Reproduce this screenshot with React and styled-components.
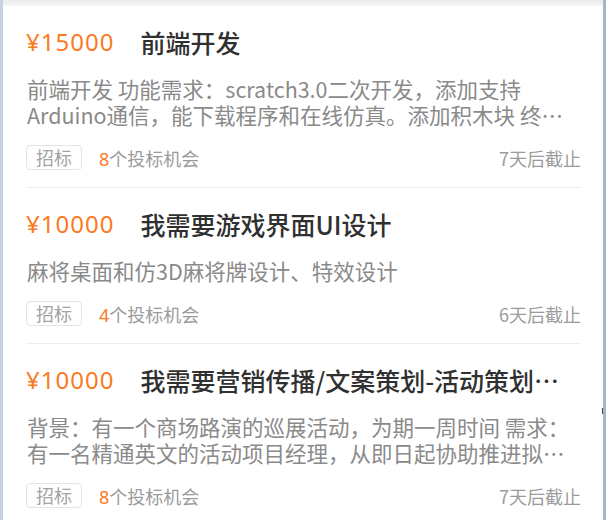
import React from "react";
import styled, { createGlobalStyle } from "styled-components";

const Global = createGlobalStyle`
  html, body { margin: 0; padding: 0; background: #ffffff; }
  body { font-family: "Noto Sans CJK SC", "Noto Sans", sans-serif; }
  * { box-sizing: border-box; }
`;

const Frame = styled.div`
  position: relative;
  width: 606px;
  height: 520px;
  overflow: hidden;
  background: #ffffff;
  border-left: 3px solid #c8d1e4;
  border-right: 3px solid #a8b4ca;
  display: flex;
  flex-direction: column;
`;

const TopBand = styled.div`
  height: 6px;
  flex: none;
  background: linear-gradient(#ececec, #f5f5f5);
`;

const List = styled.div`
  padding: 0 22px 0 23px;
  display: flex;
  flex-direction: column;
`;

const Card = styled.div`
  padding: 20px 0 17px;
  border-bottom: 1px solid #ededed;
  display: flex;
  flex-direction: column;
`;

const TitleRow = styled.div`
  display: flex;
  align-items: center;
  height: 32px;
  gap: 26px;
`;

const Price = styled.span`
  flex: none;
  font-family: "Noto Sans", "Noto Sans CJK SC", sans-serif;
  font-size: 24px;
  letter-spacing: 1px;
  color: #fb7a1f;
  line-height: 32px;
`;

const Title = styled.span`
  flex: 1;
  min-width: 0;
  font-size: 25px;
  font-weight: 500;
  color: #303030;
  line-height: 32px;
  white-space: nowrap;
`;

const Desc = styled.p`
  margin: 18px 0 0;
  padding-left: 1px;
  font-size: 21.5px;
  line-height: 26px;
  color: #8a8a8a;
`;

const Footer = styled.div`
  margin-top: 17px;
  display: flex;
  align-items: center;
  height: 25px;
  font-size: 18px;
  color: #9b9b9b;
`;

const Tag = styled.span`
  flex: none;
  height: 25px;
  line-height: 23px;
  padding: 0 9px;
  border: 1px solid #e4e4e4;
  border-radius: 4px;
  color: #a3a3a3;
  font-size: 18px;
`;

const Bids = styled.span`
  margin-left: 17px;
  flex: 1;
`;

const Count = styled.span`
  color: #fb7a1f;
  font-family: "Noto Sans", "Noto Sans CJK SC", sans-serif;
`;

const Deadline = styled.span`
  flex: none;
`;

const Marker = styled.span`
  position: absolute;
  right: -3px;
  top: 408px;
  width: 4px;
  height: 6px;
  border: 1px solid #444;
  border-right: none;
`;

const items = [
  {
    price: "¥15000",
    title: "前端开发",
    desc: "前端开发 功能需求：scratch3.0二次开发，添加支持Arduino通信，能下载程序和在线仿真。添加积木块 终…",
    bids: 8,
    deadline: "7天后截止",
  },
  {
    price: "¥10000",
    title: "我需要游戏界面UI设计",
    desc: "麻将桌面和仿3D麻将牌设计、特效设计",
    bids: 4,
    deadline: "6天后截止",
  },
  {
    price: "¥10000",
    title: "我需要营销传播/文案策划-活动策划…",
    desc: "背景：有一个商场路演的巡展活动，为期一周时间 需求：有一名精通英文的活动项目经理，从即日起协助推进拟…",
    bids: 8,
    deadline: "7天后截止",
  },
];

export default function App() {
  return (
    <>
      <Global />
      <Frame>
        <TopBand />
        <List>
          {items.map((it, i) => (
            <Card key={i}>
              <TitleRow>
                <Price>{it.price}</Price>
                <Title>{it.title}</Title>
              </TitleRow>
              <Desc>{it.desc}</Desc>
              <Footer>
                <Tag>招标</Tag>
                <Bids>
                  <Count>{it.bids}</Count>个投标机会
                </Bids>
                <Deadline>{it.deadline}</Deadline>
              </Footer>
            </Card>
          ))}
        </List>
        <Marker />
      </Frame>
    </>
  );
}
